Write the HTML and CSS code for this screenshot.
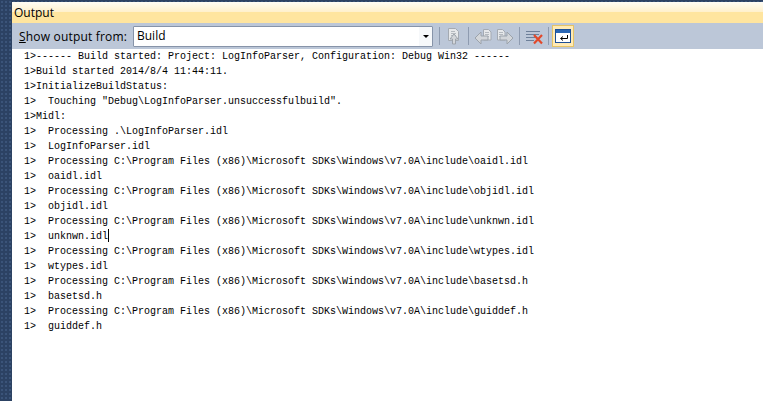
FILE: index.html
```html
<!DOCTYPE html>
<html lang="en">
<head>
<meta charset="utf-8">
<title>Output</title>
<link rel="stylesheet" href="styles.css">
</head>
<body>
<main class="pane">
  <header class="title">Output</header>
  <div class="toolbar">
    <label class="show-label"><u>S</u>how output from:</label>
    <div class="select"><span class="select-value">Build</span><span class="select-btn"><i class="caret"></i></span></div>
    <span class="sep"></span>
    <span class="btn"><svg class="icon" viewBox="0 0 22 22"><path d="M5.500 3.500h7l3 3v9h-10z" fill="#e6e8ea" stroke="#a4aab2"/><path d="M8 6.500h4M8 8.500h5M8 10.500h5" stroke="#b4b9bf"/><path d="M9.500 19v-5H7l4-5 4 5h-2.500v5z" fill="#d3d6da" stroke="#9ca3ab"/></svg></span>
    <span class="sep"></span>
    <span class="btn"><svg class="icon" viewBox="0 0 22 22"><path d="M11.500 4.500h5l2.500 2.500v8h-7.500z" fill="#e6e8ea" stroke="#a4aab2"/><path d="M13 7.500h4M13 9.500h4M13 11.500h4" stroke="#b4b9bf"/><path d="M3 13l6-6v4h7v4H9v4z" fill="#d3d6da" stroke="#9ca3ab"/></svg></span>
    <span class="btn"><svg class="icon" viewBox="0 0 22 22"><path d="M3.500 4.500h5l2.500 2.500v8H3.500z" fill="#e6e8ea" stroke="#a4aab2"/><path d="M5 7.500h4M5 9.500h4M5 11.500h4" stroke="#b4b9bf"/><path d="M19 13l-6-6v4H6v4h7v4z" fill="#d3d6da" stroke="#9ca3ab"/></svg></span>
    <span class="sep"></span>
    <span class="btn"><svg class="icon" viewBox="0 0 22 22"><path d="M3 6.500h14M3 9.500h13M3 12.500h9M3 15.500h8" stroke="#6d7f99"/><path d="M11 10l8 8.500M19 10l-8 8.500" stroke="#e2482a" stroke-width="2.200"/></svg></span>
    <span class="sep"></span>
    <span class="toggle"><svg class="wrap" viewBox="0 0 16 14"><rect x=".5" y=".5" width="15" height="13" fill="#fff" stroke="#1c4f96"/><rect x="1" y="1" width="14" height="3" fill="#2a66b4"/><path d="M12.500 6v3.500H6M8 7.500 5.500 9.500 8 11.500" fill="none" stroke="#000"/></svg></span>
  </div>
  <pre class="log">1&gt;------ Build started: Project: LogInfoParser, Configuration: Debug Win32 ------
1&gt;Build started 2014/8/4 11:44:11.
1&gt;InitializeBuildStatus:
1&gt;  Touching "Debug\LogInfoParser.unsuccessfulbuild".
1&gt;Midl:
1&gt;  Processing .\LogInfoParser.idl
1&gt;  LogInfoParser.idl
1&gt;  Processing C:\Program Files (x86)\Microsoft SDKs\Windows\v7.0A\include\oaidl.idl
1&gt;  oaidl.idl
1&gt;  Processing C:\Program Files (x86)\Microsoft SDKs\Windows\v7.0A\include\objidl.idl
1&gt;  objidl.idl
1&gt;  Processing C:\Program Files (x86)\Microsoft SDKs\Windows\v7.0A\include\unknwn.idl
1&gt;  unknwn.idl<span class="cursor"></span>
1&gt;  Processing C:\Program Files (x86)\Microsoft SDKs\Windows\v7.0A\include\wtypes.idl
1&gt;  wtypes.idl
1&gt;  Processing C:\Program Files (x86)\Microsoft SDKs\Windows\v7.0A\include\basetsd.h
1&gt;  basetsd.h
1&gt;  Processing C:\Program Files (x86)\Microsoft SDKs\Windows\v7.0A\include\guiddef.h
1&gt;  guiddef.h</pre>
</main>
</body>
</html>
```
FILE: styles.css
```css
html, body { margin: 0; height: 100%; }
body {
  overflow: hidden;
  display: flex;
  background-color: #2c4263;
  background-image: radial-gradient(#3b5479 1px, transparent 1px);
  background-size: 4px 4px;
}
.pane {
  flex: 1;
  margin: 2px 0 0 12px;
  display: flex;
  flex-direction: column;
  min-width: 0;
  background: #fff;
}
.title {
  height: 21px;
  padding-left: 2px;
  font: 12px/21px "Open Sans", sans-serif;
  color: #000;
  background: linear-gradient(#fffdf5 0, #fff0cb 10px, #ffe59f 10px, #ffe59f 100%);
}
.toolbar {
  height: 26px;
  display: flex;
  align-items: center;
  padding-left: 7px;
  background: #bcc7d8;
  font: 12px "Open Sans", sans-serif;
}
.show-label { width: 114px; flex: none; letter-spacing: .18px; }
.select {
  width: 298px;
  height: 19px;
  flex: none;
  display: flex;
  justify-content: space-between;
  background: #fff;
  border: 1px solid #8794a9;
  border-radius: 1px;
}
.select-value { padding-left: 3px; line-height: 18px; }
.select-btn { width: 13px; display: flex; align-items: center; justify-content: center; background: #f6f8fa; }
.caret { width: 0; height: 0; border: 3px solid transparent; border-top: 3px solid #000; border-bottom: 0; }
.sep { width: 1px; height: 18px; background: #8e9bb0; flex: none; margin: 0 3px; }
.select + .sep { margin-left: 6px; }
.btn { width: 22px; height: 22px; flex: none; display: flex; }
.icon { width: 22px; height: 22px; }
.toggle {
  width: 22px;
  height: 22px;
  box-sizing: border-box;
  display: flex;
  align-items: center;
  justify-content: center;
  background: #ffeab5;
  border: 1px solid #e5c365;
}
.wrap { width: 16px; height: 14px; }
.log {
  margin: 0;
  flex: 1;
  padding: 0 0 0 12px;
  font: 10px/15px "Liberation Mono", monospace;
  color: #000;
  overflow: hidden;
}
.cursor { display: inline-block; width: 1px; height: 13px; background: #000; vertical-align: -3px; }
```
